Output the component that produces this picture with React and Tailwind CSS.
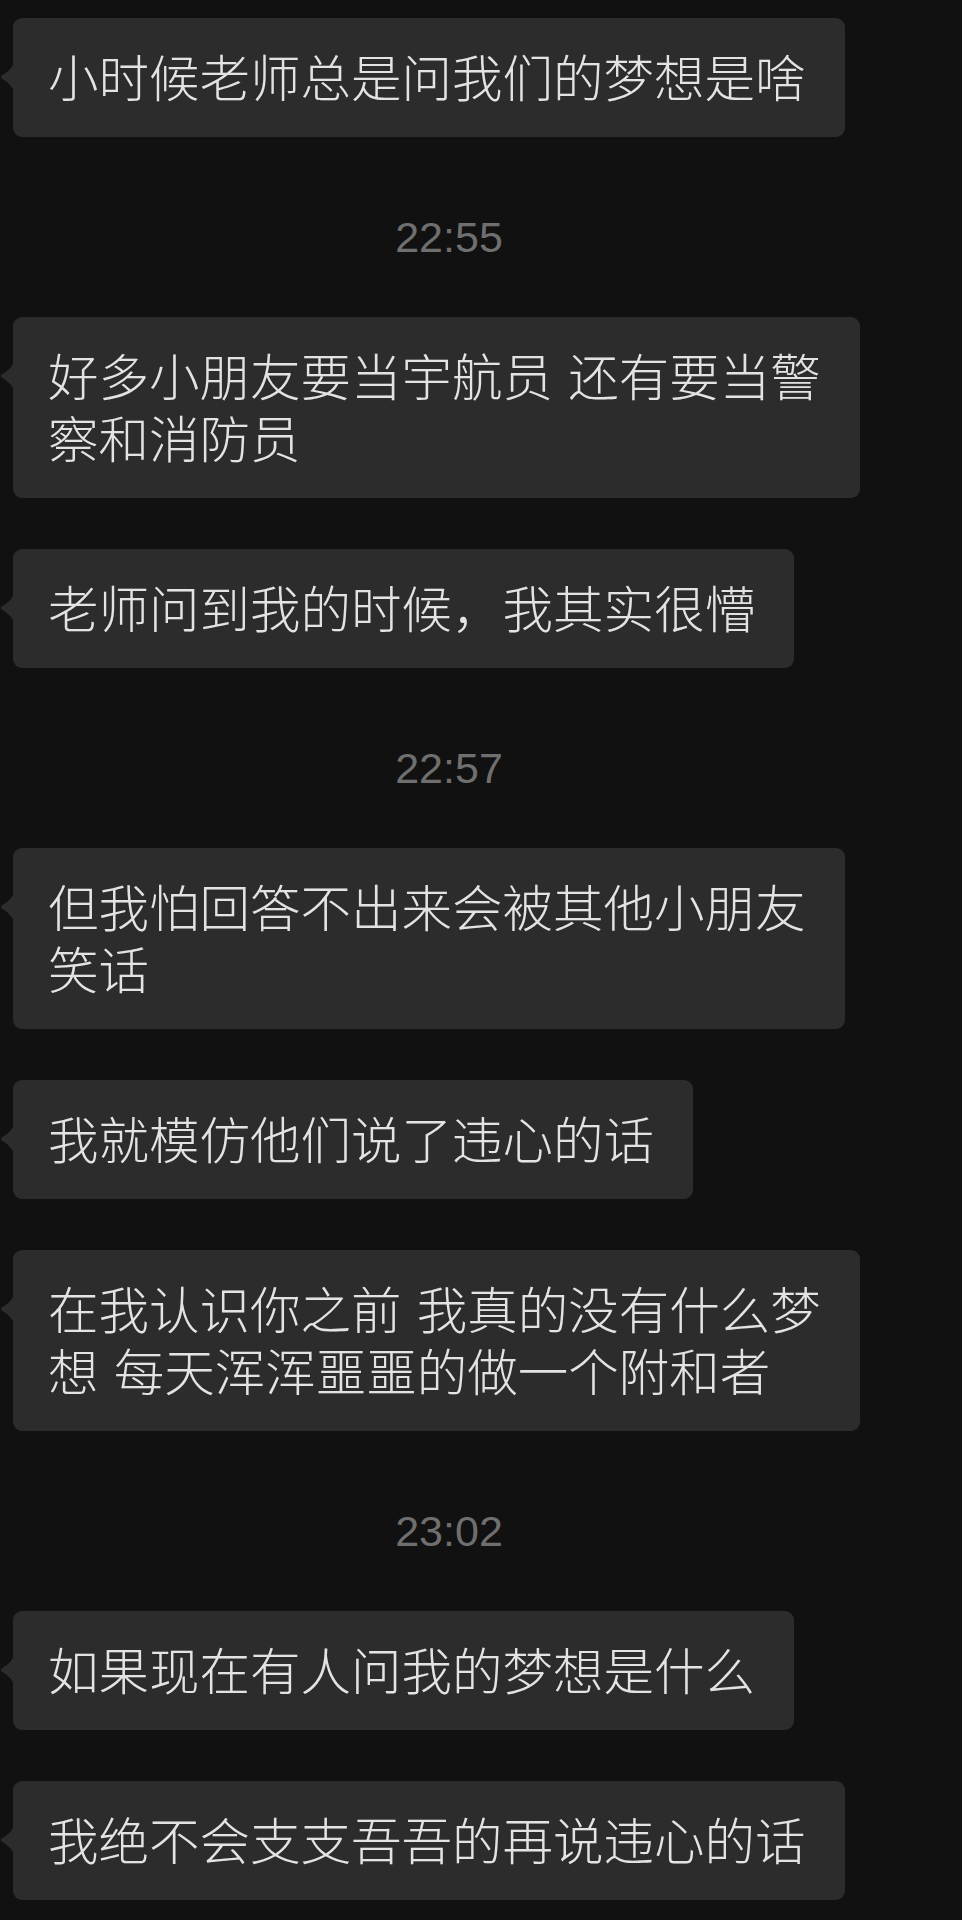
import React from "react";

const items = [
  { t: "msg", lines: ["小时候老师总是问我们的梦想是啥"] },
  { t: "time", text: "22:55" },
  { t: "msg", lines: ["好多小朋友要当宇航员 还有要当警", "察和消防员"] },
  { t: "msg", lines: ["老师问到我的时候，我其实很懵"] },
  { t: "time", text: "22:57" },
  { t: "msg", lines: ["但我怕回答不出来会被其他小朋友", "笑话"] },
  { t: "msg", lines: ["我就模仿他们说了违心的话"] },
  { t: "msg", lines: ["在我认识你之前 我真的没有什么梦", "想 每天浑浑噩噩的做一个附和者"] },
  { t: "time", text: "23:02" },
  { t: "msg", lines: ["如果现在有人问我的梦想是什么"] },
  { t: "msg", lines: ["我绝不会支支吾吾的再说违心的话"] },
];

function Tail() {
  return (
    <svg
      className="absolute left-[-13px] top-[44px]"
      width="14"
      height="30"
      viewBox="0 0 14 30"
    >
      <path
        d="M14 0 C12 7 6 11 1.5 13.6 Q0 15 1.5 16.4 C6 19 12 23 14 30 Z"
        fill="#2c2c2c"
      />
    </svg>
  );
}

function Bubble({ lines }) {
  return (
    <div className="relative ml-[13px] w-fit rounded-[9px] bg-[#2c2c2c] pl-[35px] pr-[39px] pt-[26px] pb-[31px]">
      <Tail />
      {lines.map((l, i) => (
        <div
          key={i}
          className="whitespace-pre text-[50.5px] font-light leading-[62px] text-[#e3e3e3] [word-spacing:4px]"
          style={{ fontFamily: '"Noto Sans CJK SC", "Noto Sans", sans-serif' }}
        >
          {l}
        </div>
      ))}
    </div>
  );
}

function Time({ text }) {
  return (
    <div
      className="h-[78px] w-[898px] pt-[25px] text-center text-[43px] leading-[48px] text-[#6f6f6f]"
      style={{ fontFamily: '"Liberation Sans", Arial, sans-serif' }}
    >
      {text}
    </div>
  );
}

export default function App() {
  return (
    <div className="min-h-[1920px] w-[962px] bg-[#111111] pt-[18px] pb-[20px]">
      <div className="flex flex-col gap-[51px]">
        {items.map((it, i) =>
          it.t === "msg" ? (
            <Bubble key={i} lines={it.lines} />
          ) : (
            <Time key={i} text={it.text} />
          )
        )}
      </div>
    </div>
  );
}
